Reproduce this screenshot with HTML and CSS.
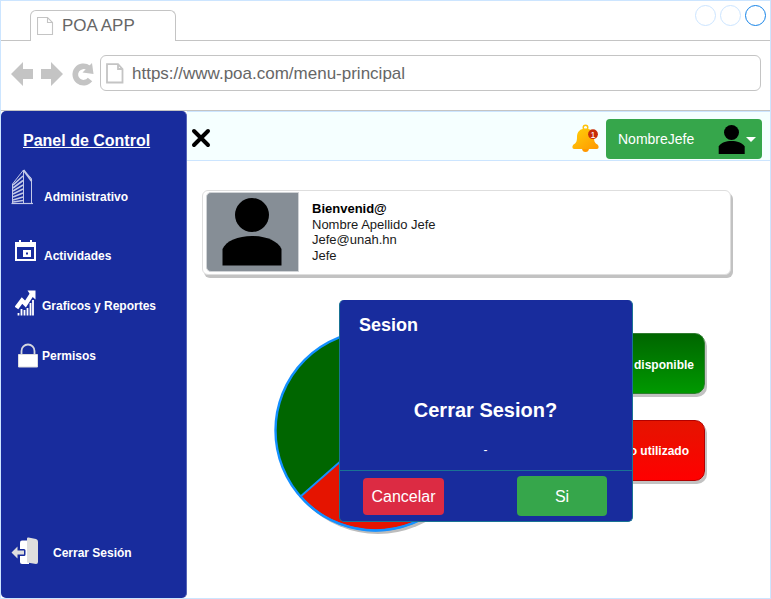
FILE: index.html
```html
<!DOCTYPE html>
<html lang="es">
<head>
<meta charset="utf-8">
<title>POA APP</title>
<link rel="stylesheet" href="styles.css">
</head>
<body>
<div class="window">
  <header class="tabs">
    <div class="tabs-start"></div>
    <div class="tab">
      <svg class="tab-page" width="17" height="20" viewBox="0 0 17 20"><path d="M.5 1.500H10.500L15.500 6.500V18.500H.5ZM10.500 1.500V6.500H15.500" fill="none" stroke="#c4c4c4" stroke-width="1.1"/></svg>
      <span>POA APP</span>
    </div>
    <div class="tabs-end">
      <i class="dot"></i><i class="dot"></i><i class="dot active"></i>
    </div>
  </header>
  <div class="toolbar">
    <svg class="nav-icons" width="84" height="28" viewBox="0 0 84 28"><g fill="#c4c4c4"><path d="M0 14L12 2V9H22V19H12V26Z"/><path d="M52 14L40 2V9H30V19H40V26Z"/></g><path d="M79 19.500A8.200 8.200 0 1 1 77.500 8" fill="none" stroke="#c4c4c4" stroke-width="5.600"/><path d="M81 3L82.500 14L71.500 12.500Z" fill="#c4c4c4"/></svg>
    <div class="address">
      <svg width="18" height="21" viewBox="0 0 18 21"><path d="M1 1.200H12L16.500 6V19.500H1ZM12 1.200V6H16.500" fill="none" stroke="#c4c4c4" stroke-width="1.8"/></svg>
      <span>https://www.poa.com/menu-principal</span>
    </div>
  </div>
  <div class="body">
    <nav class="sidebar">
      <h1>Panel de Control</h1>
      <a class="item admin">
        <svg width="23" height="36" viewBox="0 0 23 36"><g fill="none" stroke="#c3c9e8"><path d="M.5 34.500H22" stroke-width="1.2"/><path d="M1.500 34V15L12.500 1V34M12.500 1L20.500 9.500V34" stroke-width="1"/><path d="M12.500 1L20.500 12" stroke-width="2"/><path d="M2 16L12 7M2 19L12 11.500M2 22L12 16M2 25L12 20M2 28L12 24M2 31L12 28M2 33L12 31.500" stroke-width="1.600"/></g></svg>
        <span>Administrativo</span>
      </a>
      <a class="item activities">
        <svg width="21" height="21" viewBox="0 0 21 21"><path d="M0 2H21V21H0ZM2 7V19H19V7Z" fill="#fff" fill-rule="evenodd"/><path d="M4 0H6V3H4ZM15 0H17V3H15Z" fill="#fff"/><path d="M8 10H16V17H8ZM11 12.500V14.500H13V12.500Z" fill="#fff" fill-rule="evenodd"/></svg>
        <span>Actividades</span>
      </a>
      <a class="item reports">
        <svg width="21" height="26" viewBox="0 0 21 26"><path d="M1.500 18L7 10.500L10.500 14L17 4" fill="none" stroke="#fff" stroke-width="4.400"/><path d="M12.500 .5H20.500V9.500L17.700 7L14.500 3.500Z" fill="#fff"/><path d="M3.500 23V25.500M6.500 19V25.500M9.500 20V25.500M12.500 18V25.500M15.500 13V25.500M18 10V25.500" stroke="#fff" stroke-width="1.800"/></svg>
        <span>Graficos y Reportes</span>
      </a>
      <a class="item perms">
        <svg width="20" height="25" viewBox="0 0 20 25"><path d="M3.500 12V8A6.500 6.500 0 0 1 16.500 8V12" fill="none" stroke="#d5d7df" stroke-width="1.800"/><path d="M.5 11.500H19.500V24H.5Z" fill="#fff" stroke="#ddd"/></svg>
        <span>Permisos</span>
      </a>
      <a class="item logout">
        <svg width="28" height="28" viewBox="0 0 28 28"><path d="M11 3.500H18V27H11Q9 27 9 25V5.500Q9 3.500 11 3.500Z" fill="#fff"/><path d="M16 1.500Q16 .3 17.500 .5L25 2Q27 2.500 27 4.500V25Q27 27 25 27L16 25.500Z" fill="#dedede"/><path d="M.5 15.500L6.500 9.500V13.500H13V17.500H6.500V21.500Z" fill="#dedede" stroke="#182c9d" stroke-width="3" stroke-linejoin="round" paint-order="stroke"/></svg>
        <span>Cerrar Sesión</span>
      </a>
    </nav>
    <main>
      <div class="topbar">
        <svg class="close" width="20" height="20" viewBox="0 0 20 20"><path d="M3 3L17 17M17 3L3 17" stroke="#000" stroke-width="4" stroke-linecap="round"/></svg>
        <svg class="bell" width="28" height="30" viewBox="0 0 28 30"><defs><linearGradient id="gold" x2="1" y2="1"><stop stop-color="#ffd00a"/><stop offset="1" stop-color="#ff9800"/></linearGradient></defs><circle cx="13.500" cy="3.500" r="2.300" fill="none" stroke="#ffc107" stroke-width="1.400"/><path d="M10 24H17Q17 28 13.500 28T10 24Z" fill="#ff9800"/><path d="M13.500 4.500C8 4.500 5 8 5 13C5 18 4 19 1.500 20.500Q0 21.500 .5 24Q1 25 2.500 25H24.500Q26 25 26.500 24Q27 21.500 25.500 20.500C23 19 22 18 22 13C22 8 19 4.500 13.500 4.500Z" fill="url(#gold)"/><circle cx="21" cy="10.200" r="4.900" fill="#c72c08"/><text x="21" y="13.500" class="count">1</text></svg>
        <button class="user">
          <span>NombreJefe</span>
          <svg width="28" height="32" viewBox="0 0 28 32"><circle cx="13.500" cy="8.500" r="7.500"/><path d="M.7 30V22.500C3 18.500 8 17 13.500 17S24 18.500 26.700 22.500V30Z"/></svg>
          <i class="caret"></i>
        </button>
      </div>
      <section class="welcome">
        <div class="avatar"><svg width="60" height="69" viewBox="0 0 60 69"><circle cx="30" cy="17" r="17"/><path d="M.5 67.500V51C4 43 16 38 30 38S56 43 59.500 51V67.500Z"/></svg></div>
        <div class="details"><b>Bienvenid@</b><span>Nombre Apellido Jefe</span><span>Jefe@unah.hn</span><span>Jefe</span></div>
      </section>
      <section class="budget">
        <svg class="pie" width="206" height="206" viewBox="0 0 206 206"><circle cx="104" cy="104.500" r="100.500" fill="#bdbdbd"/><circle cx="101.500" cy="101.500" r="100" fill="#006600"/><path d="M101.500 101.500L26.500 167.500A100 100 0 0 0 201.500 101.500Z" fill="#e51400" stroke="#1490ff" stroke-width="2"/><circle cx="101.500" cy="101.500" r="100" fill="none" stroke="#1490ff" stroke-width="2.400"/></svg>
        <div class="legend"><div class="box available">disponible</div><div class="box used">o utilizado</div></div>
      </section>
    </main>
  </div>
  <div class="dialog">
    <h2>Sesion</h2>
    <div class="message"><strong>Cerrar Sesion?</strong><small>-</small></div>
    <footer><button class="cancel">Cancelar</button><button class="yes">Si</button></footer>
  </div>
</div>
</body>
</html>
```

FILE: styles.css
```css
* { box-sizing: border-box; }
body { margin: 0; font-family: "Liberation Sans", Arial, sans-serif; background: #fff; }
svg { display: block; flex: none; }
button { border: 0; padding: 0; font-family: inherit; color: #fff; }
.window { position: relative; width: 771px; height: 599px; border: 1px solid #cce5ff; overflow: hidden; }

.tabs { display: flex; height: 40px; }
.tabs-start { width: 29px; border-bottom: 1px solid #c4c4c4; }
.tab { display: flex; width: 146px; margin-top: 9px; padding: 5px 0 0 6px; gap: 8px; border: 1px solid #c4c4c4; border-bottom: 0; border-radius: 6px 6px 0 0; font-size: 17px; line-height: 20px; color: #666; }
.tabs-end { flex: 1; display: flex; justify-content: flex-end; gap: 4px; padding: 4px 4px 0; border-bottom: 1px solid #c4c4c4; }
.dot { width: 21px; height: 21px; border: 1px solid #cce5ff; border-radius: 50%; }
.dot.active { border-color: #1583e8; }

.toolbar { display: flex; height: 70px; padding: 14px 9px 0 10px; border-bottom: 1px solid #c4c4c4; }
.nav-icons { margin-top: 5px; }
.address { flex: 1; height: 36px; margin-left: 5px; padding: 0 5px; display: flex; align-items: center; gap: 8px; border: 1px solid #c4c4c4; border-radius: 6px; font-size: 17px; color: #666; }
.address span { padding-top: 2px; }

.body { display: flex; height: 487px; }
.sidebar { width: 186px; display: flex; flex-direction: column; background: #182c9d; border-right: 1px solid #5665b7; border-radius: 5px; color: #fff; }
.sidebar h1 { margin: 21px 0 0 22px; font-size: 16px; line-height: 18px; text-decoration: underline; }
.item { display: flex; font-size: 12px; line-height: 14px; font-weight: bold; white-space: nowrap; }
.admin { margin: 19px 0 0 10px; gap: 10px; }
.admin span { margin-top: 21px; }
.activities { margin: 35px 0 0 14px; gap: 8px; }
.activities span { margin-top: 9px; }
.reports { margin: 27px 0 0 14px; gap: 6px; }
.reports span { margin-top: 9px; }
.perms { margin: 27px 0 0 17px; gap: 4px; }
.perms span { margin-top: 6px; }
.logout { margin: 169px 0 0 10px; gap: 14px; }
.logout span { margin-top: 9px; }

main { flex: 1; }
.topbar { display: flex; height: 50px; background: #f5ffff; border-top: 1px solid #cce5ff; border-bottom: 1px solid #cce5ff; }
.close { margin: 16px 0 0 4px; }
.bell { margin: 12px 0 0 361px; }
.count { fill: #fff; font-size: 9px; text-anchor: middle; }
.user { display: flex; align-items: center; width: 156px; height: 40px; margin: 7px 0 0 6px; padding-left: 12px; background: #36a64b; border-radius: 4px; font-size: 14px; }
.user svg { margin: 1px 0 0 24px; }
.caret { border: 5px solid transparent; border-top-color: #fff; border-bottom: 0; }

.welcome { display: flex; width: 529px; height: 85px; margin: 29px 0 0 15px; padding: 1px 3px; background: #fff; border: 1px solid #dedede; border-radius: 6px; box-shadow: 2px 3px 0 #c2c2c2; }
.avatar { width: 93px; height: 80px; padding: 5px 0 0 15px; background: #868e96; border: 1px solid #d0d3d6; border-radius: 5px 0 0 5px; }
.details { display: flex; flex-direction: column; padding: 9px 0 0 13px; font-size: 13px; line-height: 15.600px; color: #1a1a1a; }
.details b { color: #000; font-weight: bold; }

.budget { display: flex; margin: 54px 0 0 87px; }
.legend { width: 251px; margin-top: 4px; padding-left: 74px; }
.box { height: 61px; width: 151px; padding-right: 10px; border: 1px solid; border-radius: 10px; box-shadow: 2px 3px 0 #c2c2c2; color: #fff; font-size: 12px; font-weight: bold; line-height: 61px; text-align: right; }
.available { border-color: #2f7d2f; background: linear-gradient(#006600, #009900); line-height: 62px; }
.used { margin-top: 26px; padding-right: 15px; border-color: #b20000; background: linear-gradient(#e51400, #ff0000); }

.dialog { position: absolute; left: 338px; top: 299px; width: 294px; height: 222px; display: flex; flex-direction: column; background: #182c9d; border: 1px solid #197394; border-top: 0; border-radius: 5px; color: #fff; }
.dialog h2 { margin: 15px 0 0 19px; font-size: 18px; line-height: 21px; }
.message { flex: 1; display: flex; flex-direction: column; align-items: center; padding: 63px 1px 0 0; }
.message strong { font-size: 20px; line-height: 23px; }
.message small { margin-top: 21px; font-size: 12px; line-height: 14px; }
.dialog footer { height: 51px; display: flex; align-items: flex-start; gap: 73px; padding: 5px 24px 0 23px; border-top: 1px solid #197394; }
.dialog button { font-size: 16px; border-radius: 4px; }
.cancel { width: 81px; height: 37px; margin-top: 2px; background: #dc2b43; }
.yes { width: 90px; height: 40px; padding-top: 1px; background: #36a64b; }
```
